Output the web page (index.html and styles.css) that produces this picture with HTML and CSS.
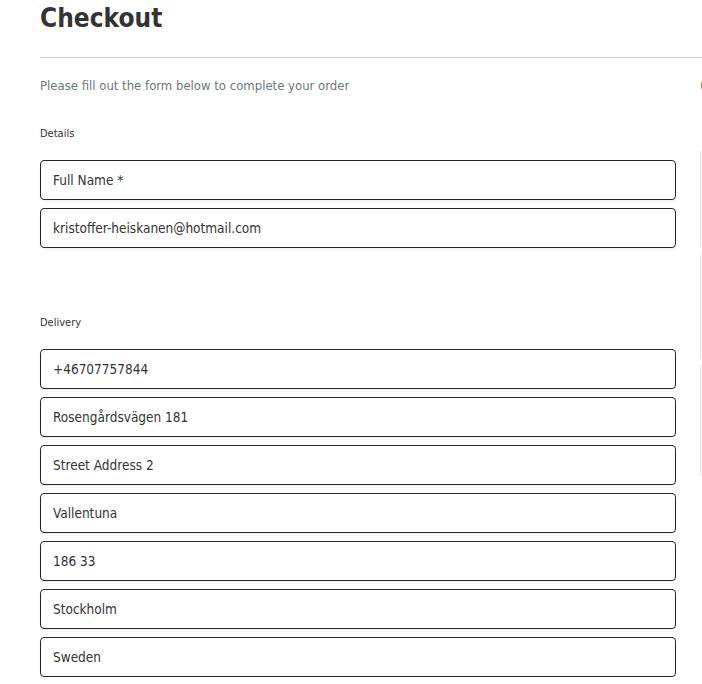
FILE: index.html
```html
<!DOCTYPE html>
<html lang="en">
<head>
<meta charset="utf-8">
<title>Checkout</title>
<link rel="stylesheet" href="styles.css">
</head>
<body>
<div class="page">
  <h1 class="title">Checkout</h1>
  <hr class="rule">
  <div class="row">
    <main class="main">
      <p class="lead">Please fill out the form below to complete your order</p>
      <section class="group">
        <h2 class="group-label">Details</h2>
        <div class="field"><input class="input" type="text" placeholder="Full Name *"></div>
        <div class="field"><input class="input" type="email" value="kristoffer-heiskanen@hotmail.com"></div>
      </section>
      <section class="group group-delivery">
        <h2 class="group-label">Delivery</h2>
        <div class="field"><input class="input" type="tel" value="+46707757844"></div>
        <div class="field"><input class="input" type="text" value="Rosengårdsvägen 181"></div>
        <div class="field"><input class="input" type="text" placeholder="Street Address 2"></div>
        <div class="field"><input class="input" type="text" value="Vallentuna"></div>
        <div class="field"><input class="input" type="text" value="186 33"></div>
        <div class="field"><input class="input" type="text" value="Stockholm"></div>
        <div class="field"><input class="input" type="text" value="Sweden"></div>
      </section>
    </main>
    <aside class="side">
      <p class="side-head">(0)</p>
      <div class="card card-1"></div>
      <div class="card card-2"></div>
      <div class="card card-3"></div>
    </aside>
  </div>
</div>
</body>
</html>
```
FILE: styles.css
```css
html, body {
  margin: 0;
  padding: 0;
  overflow: hidden;
  background: #fff;
}
body {
  font-family: "DejaVu Sans Condensed", "DejaVu Sans", sans-serif;
  font-stretch: condensed;
  color: #333;
}
.page {
  padding-left: 40px;
  width: 1000px;
}
.title {
  margin: -2px 0 0 0;
  font-size: 26px;
  line-height: 40px;
  font-weight: 700;
  color: #333;
}
.rule {
  margin: 19px 0 0 0;
  border: 0;
  border-top: 1px solid #cfcfcf;
  height: 0;
}
.row {
  display: flex;
  gap: 24px;
}
.main {
  width: 636px;
  flex: none;
}
.lead {
  margin: 16px 0 0 0;
  font-size: 13px;
  line-height: 24px;
  color: #6c757d;
}
.group-label {
  margin: 26px 0 0 0;
  font-size: 11px;
  line-height: 20px;
  font-weight: 400;
  color: #333;
}
.group-delivery .group-label {
  margin-top: 65px;
}
.field {
  margin-top: 8px;
}
.group-label + .field {
  margin-top: 16px;
}
.input {
  display: block;
  box-sizing: border-box;
  width: 100%;
  height: 40px;
  padding: 0 12px;
  border: 1px solid #262626;
  border-radius: 4px;
  font-family: inherit;
  font-stretch: condensed;
  font-size: 13.5px;
  color: #333;
  background: #fff;
  box-shadow: 0 2px 3px rgba(0, 0, 0, 0.05);
  outline: none;
}
.input::placeholder {
  color: #333;
  opacity: 1;
}
.side {
  flex: none;
  width: 300px;
}
.side-head {
  margin: 16px 0 0 0;
  font-size: 13px;
  line-height: 24px;
  color: #6c757d;
}
.card {
  border: 1px solid #ececec;
  background: #fbfbfb;
  border-radius: 3px;
}
.card-1 { margin-top: 52px; height: 96px; }
.card-2 { margin-top: 4px; height: 106px; }
.card-3 { margin-top: 4px; height: 110px; border-bottom-color: #d8d8d8; }
```
